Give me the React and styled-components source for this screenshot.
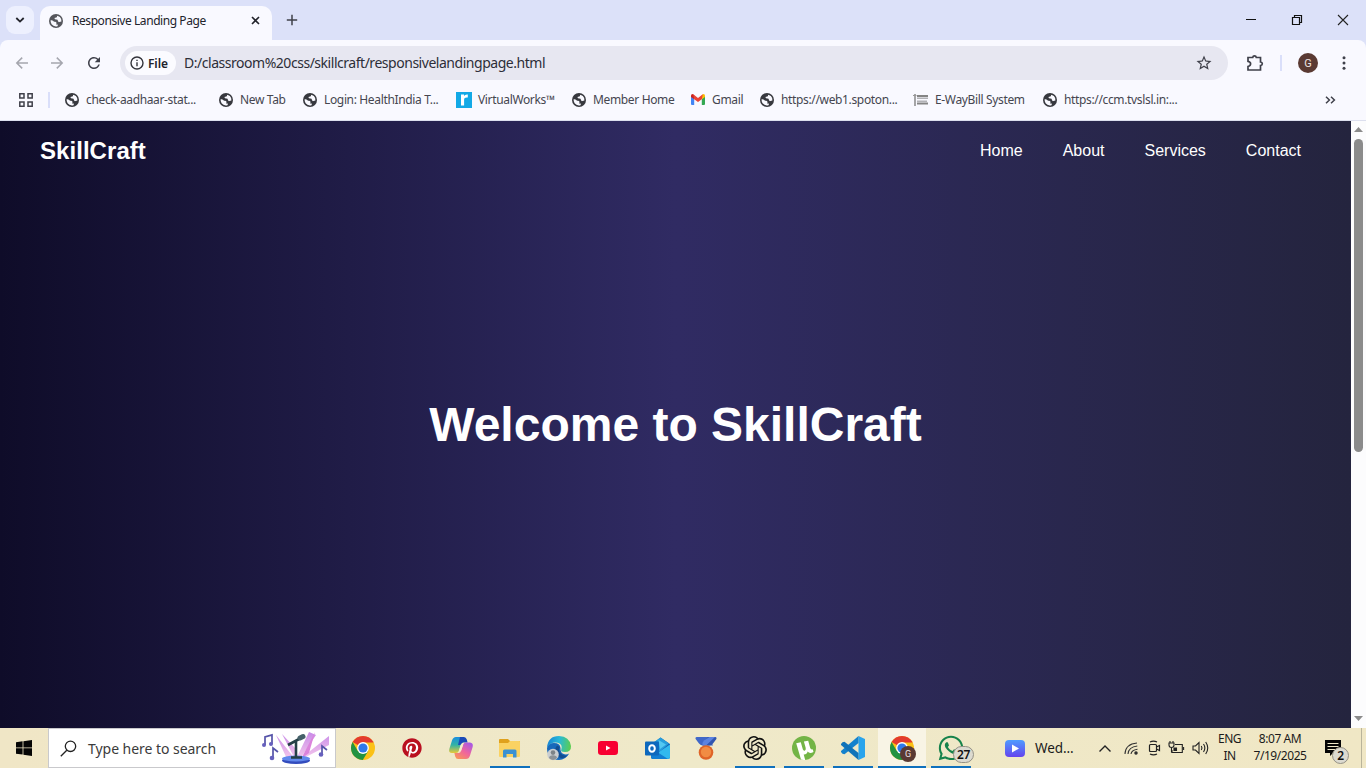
import React from "react";
import styled, { createGlobalStyle } from "styled-components";
import { FaPinterest, FaWhatsapp } from "react-icons/fa";
import { SiOpenai } from "react-icons/si";
import { MdStarBorder, MdRefresh } from "react-icons/md";

const GlobalStyle = createGlobalStyle`
  * { box-sizing: border-box; }
  body { margin: 0; overflow: hidden; font-family: "Noto Sans", "Open Sans", sans-serif; }
  svg { display: block; flex: none; overflow: visible; }
`;

const Screen = styled.div`
  width: 1366px;
  height: 768px;
  display: flex;
  flex-direction: column;
  background: #dde2f9;
`;

/* ---------- browser frame ---------- */
const TabStrip = styled.header`
  height: 40px;
  display: flex;
  align-items: flex-start;
  padding: 6px 14px 0 6px;
  background: #dce1f9;
`;
const TabSearch = styled.button`
  width: 28px;
  height: 28px;
  padding: 0;
  border: 0;
  border-radius: 9px;
  background: #edf0fe;
  display: grid;
  place-items: center;
`;
const Tab = styled.div`
  width: 232px;
  height: 34px;
  margin-left: 6px;
  padding: 0 12px 5px 9px;
  border-radius: 10px 10px 0 0;
  background: #f9f9ff;
  display: flex;
  align-items: center;
`;
const TabTitle = styled.span`
  flex: 1;
  margin-left: 9px;
  font-size: 12px;
  letter-spacing: -0.44px;
  white-space: nowrap;
  color: #22232b;
`;
const NewTab = styled.div`
  margin: 8px 0 0 14px;
`;
const WindowControls = styled.div`
  margin: 8px 3px 0 auto;
  display: flex;
  gap: 34px;
`;
const Toolbar = styled.div`
  height: 46px;
  display: flex;
  align-items: center;
  padding: 0 20px 0 15px;
  background: #f9f9ff;
  border-radius: 8px 8px 0 0;
`;
const NavButtons = styled.div`
  display: flex;
  align-items: center;
  gap: 21px;
  width: 105px;
`;
const AddressBar = styled.div`
  width: 1108px;
  height: 34px;
  border-radius: 17px;
  padding: 0 15px 0 5px;
  background: #e7e7f1;
  display: flex;
  align-items: center;
`;
const FileChip = styled.span`
  width: 51px;
  height: 24px;
  padding-left: 5px;
  border-radius: 12px;
  background: #fbfbff;
  display: flex;
  align-items: center;
  gap: 4px;
  font-size: 12px;
  font-weight: 600;
  letter-spacing: -0.1px;
  color: #22232b;
`;
const Url = styled.span`
  flex: 1;
  margin-left: 8px;
  font-size: 14px;
  padding-bottom: 2px;
  letter-spacing: -0.47px;
  white-space: nowrap;
  color: #2d2e38;
`;
const ToolbarEnd = styled.div`
  flex: 1;
  display: flex;
  align-items: center;
  justify-content: flex-end;
`;
const Separator = styled.span`
  width: 2px;
  height: 16px;
  background: #dadffa;
  margin: ${(p) => p.$margin};
`;
const Avatar = styled.span`
  width: ${(p) => p.$size}px;
  height: ${(p) => p.$size}px;
  border-radius: 50%;
  background: #5a3a33;
  color: #eee4e2;
  display: grid;
  place-items: center;
  font: ${(p) => Math.round(p.$size * 0.55)}px "Roboto", sans-serif;
`;
const MenuDots = styled.div`
  margin-left: 24px;
`;
const BookmarksBar = styled.nav`
  height: 35px;
  padding: 0 30px 7px 19px;
  background: #f9f9ff;
  border-bottom: 1px solid #dcdfee;
  display: flex;
  align-items: center;
`;
const BookmarkLink = styled.a`
  width: ${(p) => p.$width}px;
  display: flex;
  align-items: center;
  font-size: 12px;
  letter-spacing: -0.35px;
  white-space: nowrap;
  color: #45464f;
  svg { margin-right: ${(p) => p.$gap || 7}px; }
`;
const Overflow = styled.div`
  margin-left: auto;
`;

/* ---------- landing page ---------- */
const Viewport = styled.div`
  height: 607px;
  display: flex;
`;
const Landing = styled.main`
  flex: 1;
  display: flex;
  flex-direction: column;
  color: #fff;
  font-family: "Liberation Sans", Arial, sans-serif;
  background: linear-gradient(to right, #0f0c29, #302b63, #24243e);
`;
const SiteHeader = styled.header`
  height: 60px;
  padding: 0 50px 0 40px;
  display: flex;
  align-items: center;
  justify-content: space-between;
`;
const Brand = styled.div`
  font-size: 24px;
  font-weight: 700;
  letter-spacing: 0.05px;
`;
const SiteNav = styled.nav`
  display: flex;
  gap: 40px;
  font-size: 16px;
`;
const Hero = styled.section`
  flex: 1;
  display: flex;
  justify-content: center;
  padding-top: 216px;
`;
const HeroTitle = styled.h1`
  margin: 0;
  font-size: 48px;
  line-height: 55px;
  font-weight: 700;
`;
const ScrollBar = styled.div`
  width: 15px;
  padding: 6px 0 7px;
  background: #fcfcfd;
  display: flex;
  flex-direction: column;
  align-items: center;
`;
const ScrollThumb = styled.div`
  width: 9px;
  height: 313px;
  margin: 7px 0 auto;
  border-radius: 5px;
  background: #8b8b8b;
`;

/* ---------- taskbar ---------- */
const Taskbar = styled.footer`
  height: 40px;
  display: flex;
  background: linear-gradient(to right, #f0e6c6, #efe9c9 50%, #f0e7c5);
  color: #1b1b1b;
`;
const StartButton = styled.div`
  width: 48px;
  display: grid;
  place-items: center;
`;
const SearchBox = styled.div`
  width: 288px;
  padding: 0 5px 0 11px;
  border: 1px solid #c9c9cc;
  background: #fff;
  display: flex;
  align-items: center;
`;
const SearchText = styled.span`
  flex: 1;
  margin-left: 11px;
  font-size: 14px;
  letter-spacing: -0.04px;
  white-space: nowrap;
  color: #3b3b3b;
`;
const Apps = styled.div`
  display: flex;
  margin-left: 2px;
  width: 638px;
`;
const AppCell = styled.div`
  position: relative;
  width: 49px;
  display: grid;
  place-items: center;
  border: solid transparent;
  border-width: 0 ${(p) => (p.$active ? 0 : 4)}px 0 ${(p) => (p.$active ? 1 : 5)}px;
  background: ${(p) => (p.$active ? "#f8f4e5" : "none")};
  background-clip: padding-box;
  &::after {
    content: "";
    position: absolute;
    left: 0;
    right: 0;
    bottom: 0;
    height: 2px;
    background: ${(p) => (p.$open ? "#0f70bd" : "none")};
  }
`;
const AvatarBadge = styled.span`
  position: absolute;
  left: 22px;
  top: 18px;
`;
const CountBadge = styled.span`
  position: absolute;
  left: ${(p) => p.$left}px;
  top: ${(p) => p.$top}px;
  width: ${(p) => p.$width}px;
  height: 17px;
  border: 1px solid #949185;
  border-radius: 9px;
  background: #dcdad0;
  font-size: 12px;
  font-weight: 600;
  line-height: 15px;
  text-align: center;
  letter-spacing: -0.4px;
  color: #111;
`;
const NewsWidget = styled.div`
  width: 94px;
  display: flex;
  align-items: center;
  gap: 10px;
  padding-left: 29px;
  font-size: 13.5px;
  letter-spacing: -0.1px;
`;
const Tray = styled.div`
  display: flex;
  align-items: center;
  flex: 1;
`;
const TrayIcons = styled.div`
  display: flex;
  align-items: center;
  gap: 8px;
  margin-left: 29px;
`;
const TrayText = styled.div`
  width: ${(p) => p.$width}px;
  margin-top: -2px;
  text-align: center;
  font-size: 12px;
  line-height: 17px;
  letter-spacing: ${(p) => p.$spacing}px;
  white-space: nowrap;
`;
const Notifications = styled.div`
  position: relative;
  margin-left: 15px;
  margin-top: 0;
`;
const PeekEdge = styled.span`
  width: 5px;
  height: 40px;
  margin-left: auto;
  border-left: 1px solid #b9b49b;
`;

const Stroke = ({ w, h, d, c = "#3f404a", sw = 1.5, children }) => (
  <svg width={w} height={h} viewBox={`0 0 ${w} ${h}`} fill="none" stroke={c} strokeWidth={sw}>
    <path d={d} />
    {children}
  </svg>
);

const Globe = ({ color = "#37383e" }) => (
  <svg width="14" height="14" viewBox="0 0 14 14">
    <circle cx="7" cy="7" r="7" fill={color} />
    <path d="M7.9 1.7 Q8.6 3.1 7.2 3.5 L5.4 4.1 Q5.7 5.7 7.4 5.6 Q8.8 5.6 9 7 Q9.2 8.4 10.4 8.1 L12.4 7.5 Q12.7 4.9 10.9 3.1 Q9.5 1.8 7.9 1.7Z" fill="#f9f9ff" />
    <path d="M1.6 6.3 Q3.2 5.8 4.2 6.9 Q5 7.8 6.2 7.8 Q7.7 7.9 7.5 9.5 L7 10.4 L8.6 10.5 Q9.3 10.9 8.5 12.2 Q4.8 13.1 2.6 10.3 Q1.4 8.6 1.6 6.3Z" fill="#f9f9ff" />
  </svg>
);

const WorksLogo = () => (
  <svg width="16" height="16" viewBox="0 0 16 16">
    <rect width="16" height="16" fill="#13a9e6" />
    <path d="M5 2.5H8V4Q8.8 2.2 11.8 2.5V5.5Q8.1 5.1 8.1 7.7V13.5H5Z" fill="#fff" />
  </svg>
);

const GmailLogo = () => (
  <svg width="14" height="11" viewBox="0 0 14 11">
    <path d="M0 2.2V10q0 1 1 1h2.2V4.7Z" fill="#4285f4" />
    <path d="M14 2.2V10q0 1-1 1h-2.2V4.7Z" fill="#34a853" />
    <path d="M0 1.6Q0 0 1.6 0L3.2 1V5.3L0 3Z" fill="#c5221f" />
    <path d="M14 1.6Q14 0 12.4 0L10.8 1V5.3L14 3Z" fill="#fbbc04" />
    <path d="M2.2.2 7 3.9 11.8.2 10.8 5.3 7 8 3.2 5.3Z" fill="#ea4335" />
  </svg>
);

const WayBillLogo = () => (
  <svg width="15" height="12" viewBox="0 0 15 12">
    <path d="M2 0V12" stroke="#777" strokeWidth="1.3" />
    <path d="M0 1.5H3.5" stroke="#999" strokeWidth="1" />
    <path d="M4 2H15M4 9.5H15" stroke="#858585" strokeWidth="1.8" />
    <path d="M4 4.2H15M4 7.2H14" stroke="#b2b2b6" strokeWidth="1.6" />
  </svg>
);

const BOOKMARKS = [
  { label: "check-aadhaar-stat...", width: 154, icon: <Globe /> },
  { label: "New Tab", width: 84, icon: <Globe /> },
  { label: "Login: HealthIndia T...", width: 153, icon: <Globe /> },
  { label: "VirtualWorks™", width: 116, gap: 6, icon: <WorksLogo /> },
  { label: "Member Home", width: 119, icon: <Globe /> },
  { label: "Gmail", width: 69, icon: <GmailLogo /> },
  { label: "https://web1.spoton...", width: 153, icon: <Globe /> },
  { label: "E-WayBill System", width: 130, icon: <WayBillLogo /> },
  { label: "https://ccm.tvslsl.in:...", width: 140, icon: <Globe /> },
];

const ChromeLogo = () => (
  <svg width="24" height="24" viewBox="0 0 24 24">
    <circle cx="12" cy="12" r="12" fill="#fbc116" />
    <path d="M12 12 1.6 6A12 12 0 0 1 22.4 6L22.4 6.5H12Z" fill="#e33b2e" />
    <path d="M1.6 6A12 12 0 0 0 11.8 24L17.2 15 12 12 6.8 15Z" fill="#229342" />
    <circle cx="12" cy="12" r="5.9" fill="#fff" />
    <circle cx="12" cy="12" r="4.6" fill="#2f79ea" />
  </svg>
);

const PinterestLogo = () => (
  <svg width="20" height="20" viewBox="0 0 20 20">
    <circle cx="10" cy="10" r="9.5" fill="#fff" />
    <FaPinterest size={20} color="#b9101f" />
  </svg>
);

const CopilotLogo = () => (
  <svg width="24" height="22" viewBox="0 0 24 22">
    <defs>
      <linearGradient id="copA" x1="0" y1="0" x2="0" y2="1">
        <stop offset="0" stopColor="#1a8de0" />
        <stop offset=".5" stopColor="#32b4a4" />
        <stop offset="1" stopColor="#e9c838" />
      </linearGradient>
      <linearGradient id="copB" x1=".8" y1="0" x2=".1" y2="1">
        <stop offset="0" stopColor="#a858e4" />
        <stop offset=".5" stopColor="#f0659c" />
        <stop offset="1" stopColor="#f99a52" />
      </linearGradient>
    </defs>
    <path d="M7 0H14.5L10 13.5Q9.2 16 7 16H3Q-.7 16 .3 12L3 3.5Q4 0 7 0Z" fill="url(#copA)" />
    <path d="M11 0H15Q17 0 17.8 2.5L18.6 5.5H14.2Q12.4 5.5 11.6 8L9 8Z" fill="#1a4ab8" />
    <path d="M17 22H9Q7 22 6.2 19.5L5.4 16H9.5Q11.4 16 12 14L14.2 7.5Q15 5.5 17 5.5H21Q24.5 5.8 23.7 9.8L21 18.5Q20 22 17 22Z" fill="url(#copB)" />
    <path d="M11.8 7.5 9.8 14 12 14 14.2 7.5Z" fill="#f4eccb" />
  </svg>
);

const FolderLogo = () => (
  <svg width="22" height="20" viewBox="0 0 22 20">
    <path d="M1 1H9L11 3H20Q21 3 21 4V7H0V2Q0 1 1 1Z" fill="#dfa11c" />
    <path d="M0 5H9L11 3H20.2Q21 3 21 4V18Q21 19 20 19H1Q0 19 0 18Z" fill="#fad262" />
    <path d="M4 19V13Q4 11.5 5.5 11.5H16Q17.5 11.5 17.5 13V19.5H14V16H7.5V19.5H4Z" fill="#3a91d2" />
  </svg>
);

const EdgeLogo = () => (
  <svg width="24" height="24" viewBox="0 0 24 24">
    <defs>
      <linearGradient id="edgeTop" x1="0" y1=".3" x2="1" y2=".4">
        <stop offset="0" stopColor="#1682d4" />
        <stop offset=".5" stopColor="#28b9d8" />
        <stop offset="1" stopColor="#5bcd52" />
      </linearGradient>
    </defs>
    <path d="M0 12Q1 7 7 7Q13 7 13.5 12Q13 17.5 17.5 18.3Q20 18.7 22.2 17.5Q18.5 24 12 24Q0 24 0 12Z" fill="#1769bb" />
    <path d="M10 9.5Q5.5 15 10.5 20Q15 24.5 20.6 19.5Q16 20.5 13 17Q11 14 12.8 11Z" fill="#124d91" />
    <path d="M0 11.5Q1 0 12 0Q22.5 .4 24 10Q24.3 16 18 16Q13.2 16 14.3 13.5Q16 8.5 10.8 6.8Q4 5.6 0 11.5Z" fill="url(#edgeTop)" />
    <circle cx="6" cy="18.5" r="5.8" fill="#c9cdd0" />
    <circle cx="6" cy="16.6" r="2.3" fill="#7d8388" />
    <path d="M2 22Q2.3 19.3 6 19.3Q9.7 19.3 10 22Q6 26 2 22Z" fill="#8c9297" />
  </svg>
);

const YoutubeLogo = () => (
  <svg width="20" height="14" viewBox="0 0 20 14">
    <rect width="20" height="14" rx="3.2" fill="#f80032" />
    <path d="M8 4.4V9.6L12.5 7Z" fill="#fff" />
  </svg>
);

const OutlookLogo = () => (
  <svg width="25" height="22" viewBox="0 0 25 22">
    <path d="M6 8 15.5 .5 25 7V20Q25 22 23 22H8Q6 22 6 20Z" fill="#1465b8" />
    <path d="M7 6.5 15.5 .5 24 6.5 15 14.5Z" fill="#269edd" />
    <path d="M13.5 3 21 7.5 15 12Z" fill="#53c8f2" />
    <path d="M25 7.5V20Q25 22 23 22H8L15 14.2Z" fill="#32b9ee" />
    <path d="M6 11 23 22H8Q6 22 6 20Z" fill="#127ed3" />
    <rect y="4.5" width="14" height="14" rx="1" fill="#0d68bd" />
    <ellipse cx="7" cy="11.5" rx="2.8" ry="3.3" fill="none" stroke="#fff" strokeWidth="2" />
  </svg>
);

const MedalLogo = () => (
  <svg width="22" height="24" viewBox="0 0 22 24">
    <path d="M1.5 1H14L18 9.5H8Q5.5 9.5 4 7.5L.6 3Q-.2 1.5 1.5 1Z" fill="#4168c8" />
    <path d="M20.5 1H13L6.5 8.5 8 9.5H14Q16.5 9.5 18 7.5L21.4 3Q22.2 1.5 20.5 1Z" fill="#3156b0" />
    <path d="M9 4.5 14.5 1H20L11 9.5H8Q6 8 9 4.5Z" fill="#5c83e0" />
    <circle cx="11" cy="16.5" r="7.3" fill="#df6428" />
    <circle cx="11" cy="16" r="5.2" fill="#f18c43" />
  </svg>
);

const TorrentLogo = () => (
  <svg width="24" height="24" viewBox="0 0 24 24">
    <circle cx="12" cy="12" r="12" fill="#73b446" />
    <path d="M4.2 7.2 8.8 6.2 10.8 13.2Q11.5 15.2 13 14.5Q14.3 13.8 13.6 11.6L11.9 5.6 16.2 4.7 18.2 12Q18.9 14 20.8 13.3L21.5 16Q17.4 18 15.7 15.5Q14.8 18.6 11.7 18.4L13.2 23.9Q10.5 24.2 9 23.5Z" fill="#fff" />
  </svg>
);

const CodeLogo = () => (
  <svg width="24" height="24" viewBox="0 0 24 24">
    <path d="M17.5 0 24 3V21L17.5 24Z" fill="#29a4ec" />
    <path d="M17.5 0V7L3.5 18.2 1.5 17.8 0 16V15Z" fill="#1482cd" />
    <path d="M17.5 24V17L3.5 5.8 1.5 6.2 0 8V9Z" fill="#1073b9" />
  </svg>
);

const APPS = [
  { icon: <ChromeLogo /> },
  { icon: <PinterestLogo /> },
  { icon: <CopilotLogo /> },
  { icon: <FolderLogo />, open: true },
  { icon: <EdgeLogo /> },
  { icon: <YoutubeLogo /> },
  { icon: <OutlookLogo /> },
  { icon: <MedalLogo /> },
  { icon: <SiOpenai size={24} color="#111" />, open: true },
  { icon: <TorrentLogo />, open: true },
  { icon: <CodeLogo />, open: true },
  { icon: <ChromeLogo />, open: true, active: true, badge: <AvatarBadge><Avatar $size={16}>G</Avatar></AvatarBadge> },
  { icon: <FaWhatsapp size={28} color="#16834b" />, open: true, badge: <CountBadge $left={22} $top={18} $width={21}>27</CountBadge> },
];

const MicDoodle = () => (
  <svg width="68" height="32" viewBox="0 0 68 32">
    <defs>
      <linearGradient id="beam" x1="0" y1="0" x2="0" y2="1">
        <stop offset="0" stopColor="#c78ae8" />
        <stop offset="1" stopColor="#f6c9ec" />
      </linearGradient>
    </defs>
    <path d="M14 3 33 27H25ZM20 2 33 16V27ZM47 0 54 3 38 27H34ZM67 4V13L40 27H38Z" fill="url(#beam)" />
    <path d="M53 0 47 21 39 27Z" fill="#db83dc" />
    <ellipse cx="34" cy="28.5" rx="14" ry="3.5" fill="#334cbd" />
    <ellipse cx="34" cy="26.5" rx="14" ry="3" fill="#6289ed" />
    <path d="M34 9V25M29 25.5H40M26 13 39 6" stroke="#254047" strokeWidth="2.6" />
    <path d="M38 6 41 4.5" stroke="#456069" strokeWidth="5" strokeLinecap="round" />
    <g fill="none" stroke="#5654a9" strokeWidth="1.7">
      <path d="M3 13V5L10 3V12M11 26V16L16 20M60 23V14L65 18" />
    </g>
    <g fill="#6660bd">
      <circle cx="2" cy="13" r="2" /><circle cx="9" cy="12" r="2" />
      <circle cx="10" cy="26" r="2.3" /><circle cx="59" cy="22.5" r="2.3" />
    </g>
  </svg>
);

export default function App() {
  return (
    <Screen>
      <GlobalStyle />
      <TabStrip>
        <TabSearch><Stroke w={10} h={6} d="M1.3 1 5 4.6 8.7 1" c="#22232b" sw={1.8} /></TabSearch>
        <Tab>
          <Globe color="#55565c" />
          <TabTitle>Responsive Landing Page</TabTitle>
          <Stroke w={9} h={9} d="M1 1 8 8M8 1 1 8" c="#22232b" sw={1.6} />
        </Tab>
        <NewTab><Stroke w={12} h={12} d="M6 .8V11.2M.8 6H11.2" sw={1.5} /></NewTab>
        <WindowControls>
          <Stroke w={12} h={12} d="M1 5.5H11" c="#111" sw={1} />
          <Stroke w={12} h={12} d="M1.5 3.5H8.5V10.5H1.5ZM3.5 3.5V1.5H10.5V8.5H8.5" c="#111" sw={1.2} />
          <Stroke w={12} h={12} d="M1 1 11 11M11 1 1 11" c="#222" sw={1.1} />
        </WindowControls>
      </TabStrip>
      <Toolbar>
        <NavButtons>
          <Stroke w={14} h={14} d="M13 7H2M7.2 1.6 1.8 7 7.2 12.4" c="#a5a6ae" sw={1.5} />
          <Stroke w={14} h={14} d="M1 7H12M6.8 1.6 12.2 7 6.8 12.4" c="#a5a6ae" sw={1.5} />
          <MdRefresh size={18} color="#3f404a" />
        </NavButtons>
        <AddressBar>
          <FileChip>
            <Stroke w={14} h={14} d="M7 6.3V10.3M7 3.7V5.1" c="#33343c" sw={1.4}><circle cx="7" cy="7" r="6" /></Stroke>
            File
          </FileChip>
          <Url>D:/classroom%20css/skillcraft/responsivelandingpage.html</Url>
          <MdStarBorder size={18} color="#3f404a" />
        </AddressBar>
        <ToolbarEnd>
          <Stroke w={16} h={16} d="M1 2.5H5.7Q6 .8 7.5 .8Q9 .8 9.3 2.5H13.5V7Q15.3 7.2 15.3 8.7Q15.3 10.2 13.5 10.5V15H1V11.5Q3.6 11 3.6 8.8Q3.6 6.8 1 6.3Z" sw={1.7} />
          <Separator $margin="0 16px 0 17px" />
          <Avatar $size={20}>G</Avatar>
          <MenuDots>
            <svg width="4" height="14" viewBox="0 0 4 14" fill="#3f404a"><circle cx="2" cy="1.8" r="1.5" /><circle cx="2" cy="7" r="1.5" /><circle cx="2" cy="12.2" r="1.5" /></svg>
          </MenuDots>
        </ToolbarEnd>
      </Toolbar>
      <BookmarksBar>
        <Stroke w={14} h={14} d="M.8.8H5V5H.8ZM9 .8H13.2V5H9ZM.8 9H5V13.2H.8ZM9 9H13.2V13.2H9Z" sw={1.5} />
        <Separator $margin="0 15px" />
        {BOOKMARKS.map((b) => (
          <BookmarkLink key={b.label} $width={b.width} $gap={b.gap}>{b.icon}{b.label}</BookmarkLink>
        ))}
        <Overflow><Stroke w={11} h={8} d="M1 .8 4.4 4 1 7.2M6 .8 9.4 4 6 7.2" sw={1.5} /></Overflow>
      </BookmarksBar>

      <Viewport>
        <Landing>
          <SiteHeader>
            <Brand>SkillCraft</Brand>
            <SiteNav>
              {["Home", "About", "Services", "Contact"].map((t) => <span key={t}>{t}</span>)}
            </SiteNav>
          </SiteHeader>
          <Hero><HeroTitle>Welcome to SkillCraft</HeroTitle></Hero>
        </Landing>
        <ScrollBar>
          <svg width="9" height="5" viewBox="0 0 9 5"><path d="M4.5 0 9 5H0Z" fill="#8b8b8b" /></svg>
          <ScrollThumb />
          <svg width="9" height="5" viewBox="0 0 9 5"><path d="M4.5 5 9 0H0Z" fill="#8b8b8b" /></svg>
        </ScrollBar>
      </Viewport>

      <Taskbar>
        <StartButton>
          <svg width="16" height="16" viewBox="0 0 16 16" fill="#050505"><path d="M0 2.3 6.6 1.3V7.5H0ZM7.4 1.2 16 0V7.5H7.4ZM0 8.3H6.6V14.6L0 13.7ZM7.4 8.3H16V16L7.4 14.8Z" /></svg>
        </StartButton>
        <SearchBox>
          <Stroke w={17} h={17} d="M6.8 10.3.8 16.3" c="#222" sw={1.3}><circle cx="10.5" cy="6.3" r="5.2" /></Stroke>
          <SearchText>Type here to search</SearchText>
          <MicDoodle />
        </SearchBox>
        <Apps>
          {APPS.map((a, i) => (
            <AppCell key={i} $open={a.open} $active={a.active}>{a.icon}{a.badge}</AppCell>
          ))}
        </Apps>
        <NewsWidget>
          <svg width="20" height="17" viewBox="0 0 20 17">
            <defs><linearGradient id="play" x1="0" y1="0" x2="0" y2="1"><stop offset="0" stopColor="#4f9cff" /><stop offset="1" stopColor="#6443ee" /></linearGradient></defs>
            <rect width="20" height="17" rx="4" fill="url(#play)" /><path d="M7 4.5V12.5L14 8.5Z" fill="#fff" />
          </svg>
          Wed...
        </NewsWidget>
        <Tray>
          <TrayIcons>
            <Stroke w={12} h={7} d="M.5 6.5 6 1 11.5 6.5" c="#222" sw={1.4} />
            <Stroke w={22} h={14} d="M6 13Q6.5 3 18 2M9 13Q9.5 6 18.3 5M12 13Q12.5 9 18.5 8.2" c="#333" sw={1.1}><circle cx="17" cy="12" r="1.2" fill="#222" /></Stroke>
            <Stroke w={11} h={16} d="M1.5 4.5H6.5Q7.5 4.5 7.5 5.5V10.5Q7.5 11.5 6.5 11.5H1.5Q.5 11.5 .5 10.5V5.5Q.5 4.5 1.5 4.5M7.5 7 10.5 5.5V10.5L7.5 9M1 2Q4.5 .2 8 2M1 14Q4.5 15.8 8 14" c="#222" sw={1.2} />
            <Stroke w={16} h={14} d="M7 3.5H14.3V11.5H4V9M15.6 6V9M1 2H6V4Q6 6.5 3.5 6.5Q1 6.5 1 4ZM2 0V2M5 0V2M3.5 6.5V11.5" c="#222" sw={1.1}><path d="M6 7H8.5V9.5H6Z" fill="#222" /></Stroke>
            <Stroke w={17} h={14} d="M1 5H3.5L7 1.5V12.5L3.5 9H1ZM9.3 5Q10.7 7 9.3 9M11.5 3Q14.2 7 11.5 11M13.7 1Q17.8 7 13.7 13" c="#222" sw={1.1} />
          </TrayIcons>
          <TrayText $width={41} $spacing={-0.5}>ENG<br />IN</TrayText>
          <TrayText $width={60} $spacing={-0.45}>8:07 AM<br />7/19/2025</TrayText>
          <Notifications>
            <svg width="17" height="17" viewBox="0 0 17 17"><path d="M0 0H16V13H8L5 16V13H0Z" fill="#050505" /><path d="M2.5 3.5H13.5M2.5 6.5H13.5M2.5 9.5H10" stroke="#efe8c8" strokeWidth="1" /></svg>
            <CountBadge $left={7} $top={7} $width={17}>2</CountBadge>
          </Notifications>
          <PeekEdge />
        </Tray>
      </Taskbar>
    </Screen>
  );
}
